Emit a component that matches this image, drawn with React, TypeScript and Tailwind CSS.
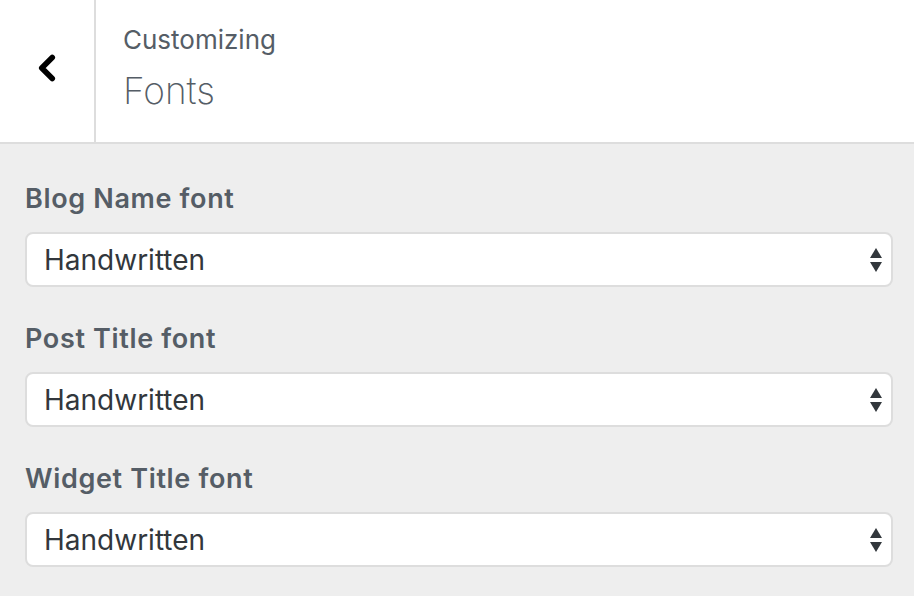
import { ChevronLeft } from 'lucide-react';

const fields = ['Blog Name font', 'Post Title font', 'Widget Title font'];

const SelectArrows = () => (
  <svg width="14" height="26" viewBox="0 0 14 26" className="text-[#32373c]">
    <path d="M7 1 L13 11 H1 Z" fill="currentColor" />
    <path d="M7 25 L13 15 H1 Z" fill="currentColor" />
  </svg>
);

const FontField = ({ label }: { label: string }) => (
  <div className="flex flex-col">
    <label className="text-[27px] font-semibold leading-[30px] tracking-[0.65px] text-[#555d66]">{label}</label>
    <div className="mt-[18px] flex h-[55px] items-center justify-between rounded-[8px] border-2 border-[#dddddd] bg-white pl-[17px] pr-[8px]">
      <span className="text-[28px] text-[#32373c]">Handwritten</span>
      <SelectArrows />
    </div>
  </div>
);

export default function App() {
  return (
    <div
      className="h-[596px] w-[914px] overflow-hidden bg-[#eeeeee]"
      style={{ fontFamily: 'Inter, "Noto Sans", sans-serif' }}
    >
      {/* header */}
      <div className="flex h-[144px] border-b-2 border-[#dddddd] bg-white">
        <div className="flex w-[96px] items-center justify-center border-r-2 border-[#dddddd] pb-[6px]">
          <ChevronLeft size={42} strokeWidth={3.2} className="text-black" />
        </div>
        <div className="flex flex-col pl-[27px] pt-[24px]">
          <span className="text-[26px] leading-[32px] text-[#555d66]">Customizing</span>
          <span className="mt-[12px] text-[37px] font-extralight leading-[46px] text-[#555d66]">Fonts</span>
        </div>
      </div>

      {/* fields */}
      <div className="flex flex-col gap-[37px] pl-[25px] pr-[21px] pt-[40px]">
        {fields.map((f) => (
          <FontField key={f} label={f} />
        ))}
      </div>
    </div>
  );
}
